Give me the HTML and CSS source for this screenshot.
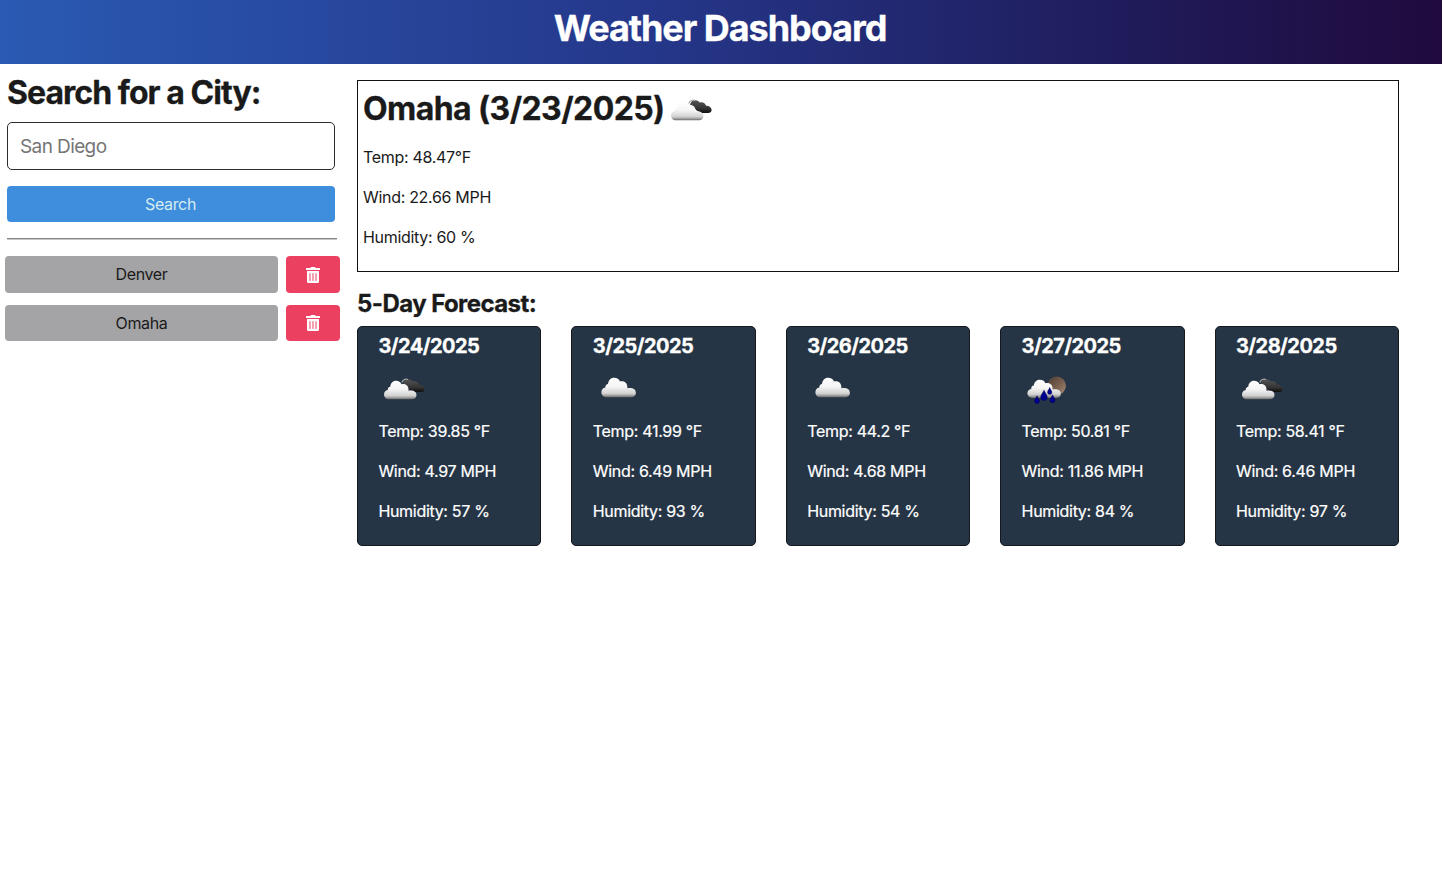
FILE: index.html
```html
<!DOCTYPE html>
<html lang="en">
<head>
<meta charset="utf-8">
<title>Weather Dashboard</title>
<link rel="stylesheet" href="styles.css">
</head>
<body>
<svg class="sprite" aria-hidden="true">
  <defs>
    <linearGradient id="white" x1="0" y1="0" x2="0" y2="1">
      <stop offset="0" stop-color="#fff"/><stop offset=".45" stop-color="#f5f5f5"/><stop offset=".8" stop-color="#d2d2d2"/><stop offset=".9" stop-color="#a5a5a5"/><stop offset="1" stop-color="#686868"/>
    </linearGradient>
    <linearGradient id="dark" x1="0" y1="0" x2="0" y2="1">
      <stop offset="0" stop-color="#565656"/><stop offset=".65" stop-color="#333"/><stop offset="1" stop-color="#0c0c0c"/>
    </linearGradient>
    <linearGradient id="moon" x1="0" y1="0" x2="1" y2="1">
      <stop offset="0" stop-color="#4b3c33"/><stop offset=".55" stop-color="#7b6150"/><stop offset="1" stop-color="#a98d78"/>
    </linearGradient>
    <path id="puff" d="M5 19.500C2 19.500 0 17.300 0 14.500C0 12 1.500 10.100 4 9.800C3.600 8 5 6.300 6.600 6.200C7 2.700 9.200 0 12.700 0C15.600 0 17.600 1.300 18.600 3.600C21.800 2.600 25.800 4.600 25.900 8.500C26.200 9.300 26 9.900 25.800 10.500C30.600 9.500 34.500 11 34.500 15C34.500 17.800 32.300 19.500 29.500 19.500Z"/>
    <symbol id="trash" viewBox="0 0 448 512"><path fill="#fff" d="M32 464a48 48 0 0 0 48 48h288a48 48 0 0 0 48-48V128H32zm272-256a16 16 0 0 1 32 0v224a16 16 0 0 1-32 0zm-96 0a16 16 0 0 1 32 0v224a16 16 0 0 1-32 0zm-96 0a16 16 0 0 1 32 0v224a16 16 0 0 1-32 0zM432 32H312l-9.400-18.700A24 24 0 0 0 281.100 0H166.800a23.720 23.720 0 0 0-21.400 13.300L136 32H16A16 16 0 0 0 0 48v32a16 16 0 0 0 16 16h416a16 16 0 0 0 16-16V48a16 16 0 0 0-16-16z"/></symbol>
    <symbol id="broken" viewBox="0 0 50 50">
      <g transform="translate(1 1.300) scale(.97 .98)">
        <path fill="url(#dark)" d="M24.800 19.500C25.500 16.800 27.400 15.200 30 15.200C32.200 15.200 33.700 16 34.600 17.500C37.700 16.700 40.600 17.800 41.200 20.900C44 20.900 47 22.400 47 25.300C47 27.300 45.500 28.300 43.300 28.300H37L32 26Z"/>
        <path fill="none" stroke="#a9a9a9" stroke-width="1.200" d="M23.500 18.500C24.600 15.600 27.500 14.500 29.800 15.600"/>
        <use href="#puff" fill="url(#white)" transform="translate(5.200 16.800) scale(.97 .97)"/>
      </g>
    </symbol>
    <symbol id="cloud" viewBox="0 0 50 50"><use href="#puff" fill="url(#white)" transform="translate(8.400 14.800)"/></symbol>
    <symbol id="rain" viewBox="0 0 50 50">
      <circle cx="34.700" cy="22.800" r="9.200" fill="url(#moon)"/>
      <use href="#puff" fill="url(#white)" transform="translate(5.400 16.800) scale(.97 .93)"/>
      <g fill="#00008f" stroke="#000050" stroke-width=".5" transform="translate(0 -.8)">
        <path d="M22 28C22.800 30.500 25.300 32.500 25.300 35A3.300 3.300 0 0 1 18.700 35C18.700 32.500 21.200 30.500 22 28Z"/>
        <path d="M27.700 25.300C28.200 27.300 29.800 28.300 29.800 30.200A2.100 2.100 0 0 1 25.600 30.200C25.600 28.300 27.200 27.300 27.700 25.300Z"/>
        <path d="M30.500 32.500C31.100 34.500 33 36 33 38A2.500 2.500 0 0 1 28 38C28 36 29.900 34.500 30.500 32.500Z"/>
        <path d="M15 33.500C15.600 35.500 17.400 37 17.400 39A2.400 2.400 0 0 1 12.600 39C12.600 37 14.400 35.500 15 33.500Z"/>
      </g>
    </symbol>
  </defs>
</svg>
<header class="header"><h1 class="title">Weather Dashboard</h1></header>
<main class="layout">
  <aside class="sidebar">
    <h2 class="search-title">Search for a City:</h2>
    <input class="city-input" type="text" placeholder="San Diego" aria-label="City">
    <button class="search-btn">Search</button>
    <hr class="rule">
    <div class="history">
      <div class="history-row"><button class="city-btn">Denver</button><button class="delete-btn" aria-label="Delete"><svg class="trash"><use href="#trash"/></svg></button></div>
      <div class="history-row"><button class="city-btn">Omaha</button><button class="delete-btn" aria-label="Delete"><svg class="trash"><use href="#trash"/></svg></button></div>
    </div>
  </aside>
  <div class="content">
    <section class="today">
      <div class="today-head"><h2 class="today-title">Omaha (3/23/2025)</h2><svg class="weather today-icon"><use href="#broken"/></svg></div>
      <p class="stat">Temp: 48.47°F</p>
      <p class="stat">Wind: 22.66 MPH</p>
      <p class="stat">Humidity: 60 %</p>
    </section>
    <h3 class="forecast-title">5-Day Forecast:</h3>
    <section class="forecast">
      <article class="card"><h4 class="date">3/24/2025</h4><svg class="weather"><use href="#broken"/></svg><p class="stat">Temp: 39.85 °F</p><p class="stat">Wind: 4.97 MPH</p><p class="stat">Humidity: 57 %</p></article>
      <article class="card"><h4 class="date">3/25/2025</h4><svg class="weather"><use href="#cloud"/></svg><p class="stat">Temp: 41.99 °F</p><p class="stat">Wind: 6.49 MPH</p><p class="stat">Humidity: 93 %</p></article>
      <article class="card"><h4 class="date">3/26/2025</h4><svg class="weather"><use href="#cloud"/></svg><p class="stat">Temp: 44.2 °F</p><p class="stat">Wind: 4.68 MPH</p><p class="stat">Humidity: 54 %</p></article>
      <article class="card"><h4 class="date">3/27/2025</h4><svg class="weather"><use href="#rain"/></svg><p class="stat">Temp: 50.81 °F</p><p class="stat">Wind: 11.86 MPH</p><p class="stat">Humidity: 84 %</p></article>
      <article class="card"><h4 class="date">3/28/2025</h4><svg class="weather"><use href="#broken"/></svg><p class="stat">Temp: 58.41 °F</p><p class="stat">Wind: 6.46 MPH</p><p class="stat">Humidity: 97 %</p></article>
    </section>
  </div>
</main>
</body>
</html>
```
FILE: styles.css
```css
* { box-sizing: border-box; }
body { margin: 0; background: #fff; color: #1a1a1a; font: 16px/24px Inter, sans-serif; }
h1, h2, h3, h4, p { margin: 0; white-space: nowrap; }
h1, h2, h3, h4 { -webkit-text-stroke: 0.3px currentColor; }
.sprite { position: absolute; width: 0; height: 0; }
.header { height: 64px; padding: 6px 2px 0 0; background: linear-gradient(90deg, #2a5ab3, #25378a 45%, #1f1a58 80%, #200a3d); text-align: center; }
.title { color: #fff; font-size: 36px; line-height: 44px; letter-spacing: -1.05px; }
.layout { display: flex; padding-top: 8px; }
.sidebar { width: 357px; padding: 0 0 0 7px; }
.search-title { height: 50px; font-size: 32px; line-height: 42px; letter-spacing: -0.95px; }
.city-input { display: block; width: 328px; height: 48px; padding: 0 12px; border: 1px solid #2c2c30; border-radius: 5px; font: 19px/24px Inter, sans-serif; letter-spacing: -0.6px; color: #1a1a1a; }
.city-input::placeholder { color: #757575; }
.search-btn, .city-btn, .delete-btn { border: 0; padding: 0; border-radius: 4px; font: 16px/24px Inter, sans-serif; letter-spacing: -0.35px; }
.search-btn { display: block; width: 328px; height: 36px; margin-top: 16px; padding-right: 1px; background: #3f8edd; color: #d5ebf2; }
.rule { width: 330px; height: 2px; margin: 16px 0; border: 0; border-top: 1px solid #858585; border-bottom: 1px solid #c8c8c8; }
.history { display: grid; gap: 12px; width: 335px; margin-left: -2px; }
.history-row { display: grid; grid-template-columns: 273px 54px; gap: 8px; height: 37px; }
.history-row:last-child { height: 36px; }
.city-btn { padding-bottom: 1px; background: #a4a4a6; color: #1a1a1a; }
.history-row:last-child .city-btn { padding-bottom: 0; }
.delete-btn { display: flex; align-items: center; justify-content: center; background: #eb4060; }
.trash { width: 14px; height: 16px; }
.content { width: 1042px; padding-top: 8px; }
.today { height: 192px; padding: 0 5px; border: 1px solid #111; }
.today-head { display: flex; align-items: flex-start; height: 64px; }
.today-title { padding-top: 7px; font-size: 32px; line-height: 42px; letter-spacing: -0.57px; }
.weather { display: block; width: 50px; height: 50px; }
.today-icon { margin: 3px 0 0 0; }
.stat { margin-bottom: 16px; letter-spacing: -0.31px; }
.forecast-title { padding-top: 16px; height: 54px; font-size: 24px; line-height: 32px; letter-spacing: -0.57px; }
.forecast { display: grid; grid-template-columns: repeat(5, 1fr); gap: 30px; }
.card { height: 220px; padding: 7px 0 0 20.4px; border: 1px solid #15181d; border-radius: 5px; background: #263545; color: #fff; }
.card .stat { -webkit-text-stroke: 0.2px currentColor; }
.date { height: 29px; font-size: 20px; line-height: 24px; letter-spacing: -0.54px; }
.card .weather { margin-bottom: 6px; }
```
